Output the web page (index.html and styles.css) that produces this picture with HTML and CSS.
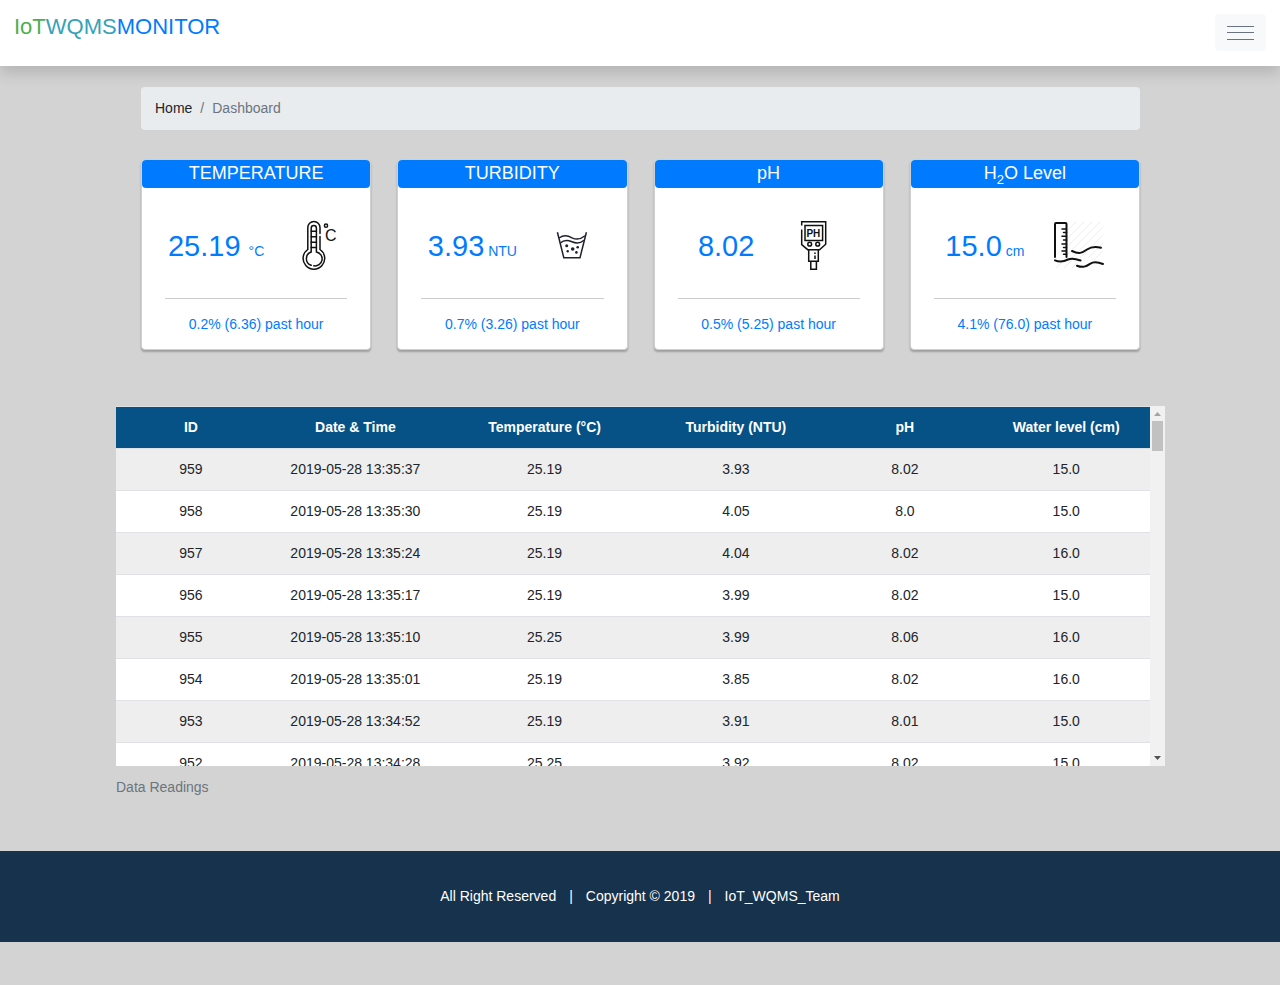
FILE: index.html
```html
<!DOCTYPE html>
<html lang="en">
<head>
<meta charset="utf-8">
<meta name="viewport" content="width=device-width, initial-scale=1">
<title>IoTWQMS Monitor</title>
<link rel="stylesheet" href="styles.css">
</head>
<body>
<header class="topbar">
  <a class="brand" href="#"><span class="brand-iot">IoT</span><span class="brand-wqms">WQMS</span>MONITOR</a>
  <button class="menu-button" type="button" aria-label="Menu">
    <svg width="27" height="17" viewBox="0 0 27 17" shape-rendering="crispEdges" aria-hidden="true"><path d="M0 1.5h27M0 7.5h27M0 14.5h27" stroke="#6b7380"/></svg>
  </button>
</header>

<main class="page">
  <nav class="crumbs" aria-label="Breadcrumb">
    <a class="crumb-link" href="#">Home</a><span class="crumb-sep">/</span><span>Dashboard</span>
  </nav>

  <section class="cards">
    <article class="card">
      <h2 class="card-title">TEMPERATURE</h2>
      <div class="card-body">
        <div class="reading">
          <p class="value">25.19 <span class="unit">°C</span></p>
          <svg class="icon" viewBox="0 0 50 50" fill="none" stroke="#111" stroke-width="1.5" stroke-linecap="round" aria-hidden="true">
            <path d="M26 16.5V29.5A10.8 10.8 0 1 1 13.8 29.5V7.5A6.1 6.1 0 0 1 26 7.5V13.5"/>
            <path d="M17.2 45.3A7 7 0 0 1 17.2 32V8.2A2.6 2.6 0 0 1 22.4 8.2V32A7 7 0 0 1 19.8 45.8"/>
            <path d="M17.2 11.2h5.2M17.2 16.7h5.2M17.2 22.2h5.2M17.2 27.5h5.2"/>
            <circle cx="32" cy="5.7" r="1.6"/>
            <text class="icon-c" x="31" y="20.5" fill="#111" stroke="none">C</text>
          </svg>
        </div>
        <p class="trend">0.2% (6.36) past hour</p>
      </div>
    </article>

    <article class="card">
      <h2 class="card-title">TURBIDITY</h2>
      <div class="card-body">
        <div class="reading">
          <p class="value">3.93<span class="unit"> NTU</span></p>
          <svg class="icon" viewBox="0 0 50 50" fill="none" stroke="#22202e" stroke-width="1.5" aria-hidden="true">
            <path d="M10.4 12.3L16.8 37.7H33L39.4 12.3"/>
            <path d="M12 18C17 14.5 20.5 15.5 25 17.8S33 20 38 15.8"/>
            <path d="M13.4 23C17 19.5 21 20 25 21.8S33 23.7 37 20.2"/>
            <g fill="#22202e" stroke="none"><circle cx="19.7" cy="25.7" r="1.5"/><circle cx="25.7" cy="29" r="1.8"/><circle cx="30.7" cy="27.3" r="1.3"/><circle cx="20.7" cy="31.3" r="1.2"/><circle cx="29.4" cy="32.4" r="1.3"/></g>
          </svg>
        </div>
        <p class="trend">0.7% (3.26) past hour</p>
      </div>
    </article>

    <article class="card">
      <h2 class="card-title">pH</h2>
      <div class="card-body">
        <div class="reading">
          <p class="value value-plain">8.02</p>
          <svg class="icon" viewBox="0 0 50 50" fill="none" stroke="#111" stroke-width="1.5" aria-hidden="true">
            <path d="M12.7 5.5V1.7H36.7V24.2L30.5 29.7H18.7L12.7 24.7V9.5"/>
            <rect x="16" y="5.5" width="17.6" height="15"/>
            <circle cx="20.7" cy="24.2" r="1.9"/><circle cx="28.7" cy="24.2" r="1.9"/>
            <path d="M19.7 29.7V41.2H29.3V29.7M21.8 41.2V49.2H27.4V41.2M26 32.6V34M26 35.5V39"/>
            <text class="icon-ph" x="17.4" y="17" fill="#111" stroke="none">PH</text>
          </svg>
        </div>
        <p class="trend">0.5% (5.25) past hour</p>
      </div>
    </article>

    <article class="card">
      <h2 class="card-title">H<sub class="sub">2</sub>O Level</h2>
      <div class="card-body">
        <div class="reading">
          <p class="value">15.0<span class="unit"> cm</span></p>
          <svg class="icon" viewBox="0 0 50 50" fill="none" stroke="#111" stroke-width="2" stroke-linecap="round" aria-hidden="true">
            <path stroke="#eeeeee" stroke-width="1" d="M14 10L22 2M14 18L30 2M14 26L38 2M14 34L46 2M18 38L49 7M26 38L49 15M2 48L8 42M10 48L18 40M18 48L24 42M34 38L49 23M40 40L49 31"/>
            <path d="M1 37V4Q1 3 2 3H11.5Q12.5 3 12.5 4V37"/>
            <path stroke-width="1.5" d="M8 9h4M9.5 12.5h3M8 16.3h4M9.5 20h3M8 24h4M9.5 27.5h3M8 31h4M9.5 34.3h3"/>
            <path d="M18 31C25 34.5 28 33 33 29.5S42 26.500 47 27.7"/>
            <path d="M1 40.3C6 42.5 10 41.5 14 39.5S22 38.8 26.5 40.5"/>
            <path d="M23 45.7C29 48 32 46.5 36 43.8S44 42 49 44"/>
          </svg>
        </div>
        <p class="trend">4.1% (76.0) past hour</p>
      </div>
    </article>
  </section>

  <figure class="readings">
    <div class="table-frame">
      <div class="scroller" tabindex="0">
        <table class="table">
          <colgroup><col class="c-id"><col class="c-date"><col class="c-temp"><col class="c-turb"><col class="c-ph"><col class="c-level"></colgroup>
          <thead>
            <tr><th scope="col">ID</th><th scope="col">Date &amp; Time</th><th scope="col">Temperature (°C)</th><th scope="col">Turbidity (NTU)</th><th scope="col">pH</th><th scope="col">Water level (cm)</th></tr>
          </thead>
          <tbody>
            <tr><td>959</td><td>2019-05-28 13:35:37</td><td>25.19</td><td>3.93</td><td>8.02</td><td>15.0</td></tr>
            <tr><td>958</td><td>2019-05-28 13:35:30</td><td>25.19</td><td>4.05</td><td>8.0</td><td>15.0</td></tr>
            <tr><td>957</td><td>2019-05-28 13:35:24</td><td>25.19</td><td>4.04</td><td>8.02</td><td>16.0</td></tr>
            <tr><td>956</td><td>2019-05-28 13:35:17</td><td>25.19</td><td>3.99</td><td>8.02</td><td>15.0</td></tr>
            <tr><td>955</td><td>2019-05-28 13:35:10</td><td>25.25</td><td>3.99</td><td>8.06</td><td>16.0</td></tr>
            <tr><td>954</td><td>2019-05-28 13:35:01</td><td>25.19</td><td>3.85</td><td>8.02</td><td>16.0</td></tr>
            <tr><td>953</td><td>2019-05-28 13:34:52</td><td>25.19</td><td>3.91</td><td>8.01</td><td>15.0</td></tr>
            <tr><td>952</td><td>2019-05-28 13:34:28</td><td>25.25</td><td>3.92</td><td>8.02</td><td>15.0</td></tr>
          </tbody>
        </table>
      </div>
      <div class="scrollbar" aria-hidden="true">
        <svg class="arrow" viewBox="0 0 15 15"><path d="M4 10L7.5 6L11 10Z" fill="#a3a3a3"/></svg>
        <div class="thumb"></div>
        <svg class="arrow arrow-down" viewBox="0 0 15 15"><path d="M4 5L7.5 9L11 5Z" fill="#505050"/></svg>
      </div>
    </div>
    <figcaption class="caption">Data Readings</figcaption>
  </figure>
</main>

<footer class="footer">
  <span>All Right Reserved</span><span>|</span><span>Copyright © 2019</span><span>|</span><span>IoT_WQMS_Team</span>
</footer>
</body>
</html>
```

FILE: styles.css
```css
* { box-sizing: border-box; }

body {
  margin: 0;
  background: #d3d3d3;
  color: #212529;
  font: 14px/22px "Liberation Sans", Arial, sans-serif;
}

/* Top bar */
.topbar {
  display: flex;
  align-items: flex-start;
  justify-content: space-between;
  padding: 14px 14px 15px;
  background: #fff;
  box-shadow: 0 7px 14px rgba(0, 0, 0, .15);
}
.brand {
  color: #007bff;
  font-size: 22px;
  line-height: 26px;
  text-decoration: none;
}
.brand-iot { color: #4caf50; }
.brand-wqms { color: #36a2b8; }
.menu-button {
  display: flex;
  padding: 11px 12px 9px;
  border: 0;
  border-radius: 4px;
  background: #f8f9fa;
}

.page {
  max-width: 1050px;
  margin: 0 auto;
  padding-top: 21px;
}

/* Breadcrumb */
.crumbs {
  display: flex;
  gap: 8px;
  margin: 0 25px 29px 26px;
  padding: 10px 14px 11px;
  border-radius: 4px;
  background: #e9ecef;
  color: #6c757d;
}
.crumb-link { color: #212529; text-decoration: none; }

/* Sensor cards */
.cards {
  display: grid;
  grid-template-columns: repeat(4, 1fr);
  gap: 26px;
  margin: 0 25px 0 26px;
}
.card {
  border: 1px solid #d0d0d0;
  border-radius: 4px;
  background: #fff;
  box-shadow: 0 2px 2px rgba(0, 0, 0, .25);
  color: #007bff;
  text-align: center;
}
.card-title {
  margin: 0;
  border-radius: 4px;
  background: #007bff;
  color: #fff;
  font-size: 18px;
  font-weight: 400;
  line-height: 26px;
  height: 28px;
}
.sub { font-size: 13px; line-height: 0; }
.card-body { padding: 32px 23px 14px; }
.reading {
  display: flex;
  align-items: center;
  justify-content: center;
  gap: 30px;
  padding-bottom: 28px;
  border-bottom: 1px solid #ccc;
}
.value {
  margin: 0;
  padding-top: 2px;
  font-size: 29px;
  line-height: 48px;
  white-space: nowrap;
}
.value-plain { padding-right: 5px; }
.unit { font-size: 14px; line-height: 22px; }
.icon { flex: none; width: 50px; height: 50px; }
.icon-c { font: 16px "Liberation Sans", Arial, sans-serif; }
.icon-ph { font: bold 10px "Liberation Sans", Arial, sans-serif; }
.trend { margin: 14px 0 0; }

/* Readings table */
.readings { margin: 56px 0 0 1px; }
.table-frame { display: flex; height: 360px; }
.scroller {
  flex: 1;
  overflow-y: auto;
  scrollbar-width: none;
  background: #fff;
}
.table {
  width: 100%;
  border-collapse: collapse;
  table-layout: fixed;
  text-align: center;
}
.c-id { width: 14.5%; }
.c-date { width: 17.3%; }
.c-temp { width: 19.3%; }
.c-turb { width: 17.7%; }
.c-ph { width: 15%; }
.c-level { width: 16.2%; }
.table th,
.table td {
  height: 42px;
  padding: 0 0 2px;
  border-top: 1px solid #dee2e6;
}
.table th { background: #065286; color: #fff; }
.table tbody tr:nth-child(odd) { background: #eee; }
.caption { padding-top: 10px; color: #6c757d; }

/* Scrollbar beside the table */
.scrollbar {
  display: flex;
  flex-direction: column;
  width: 15px;
  background: #f1f1f1;
}
.arrow { display: block; width: 15px; height: 15px; }
.arrow-down { margin-top: auto; }
.thumb { height: 30px; margin: 0 2px; background: #c1c1c1; }

/* Footer */
.footer {
  display: flex;
  justify-content: center;
  gap: 13px;
  margin: 53px 0 43px;
  padding: 34px 14px 35px;
  background: #17324d;
  color: #fff;
}
```
